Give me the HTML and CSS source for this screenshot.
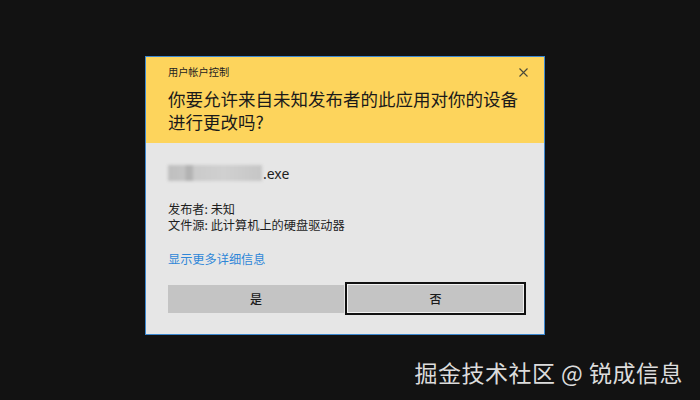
FILE: index.html
```html
<!DOCTYPE html>
<html lang="zh-CN">
<head>
<meta charset="utf-8">
<link rel="stylesheet" href="styles.css">
</head>
<body>
<div class="dialog">
  <div class="header">
    <div class="title-row">
      <span class="title">用户帐户控制</span>
      <svg class="close" width="9" height="9" viewBox="0 0 9 9"><path d="M0.5 0.5 L8.5 8.5 M8.5 0.5 L0.5 8.5" stroke="#4a4a3a" stroke-width="1.1" fill="none"/></svg>
    </div>
    <div class="question">你要允许来自未知发布者的此应用对你的设备<br>进行更改吗?</div>
  </div>
  <div class="body">
    <div class="file-row"><span class="blur"></span><span class="ext">.exe</span></div>
    <div class="meta">
      <div>发布者: 未知</div>
      <div>文件源: 此计算机上的硬盘驱动器</div>
    </div>
    <div class="link">显示更多详细信息</div>
    <div class="buttons">
      <div class="btn yes">是</div>
      <div class="btn no">否</div>
    </div>
  </div>
</div>
<div class="watermark">掘金技术社区 @ 锐成信息</div>
</body>
</html>
```
FILE: styles.css
```css
html, body {
  margin: 0;
  padding: 0;
  width: 700px;
  height: 400px;
  background: #121212;
  overflow: hidden;
  font-family: "Noto Sans CJK SC", "Noto Sans", sans-serif;
}
body {
  padding-top: 56px;
  box-sizing: border-box;
}
.dialog {
  margin-left: 145px;
  width: 400px;
  height: 279px;
  box-sizing: border-box;
  border: 1px solid #3b87cf;
  background: #e6e6e6;
  display: flex;
  flex-direction: column;
}
.header {
  background: #fdd45c;
  padding: 7px 16px 9px 22px;
  height: 86px;
  box-sizing: border-box;
}
.title-row {
  display: flex;
  justify-content: space-between;
  align-items: center;
  height: 16px;
}
.title {
  font-size: 10.2px;
  line-height: 16px;
  color: #222;
}
.close {
  display: block;
}
.question {
  margin-top: 7px;
  font-size: 17.5px;
  line-height: 23px;
  color: #1a1a1a;
}
.body {
  flex: 1;
  padding: 20px 18px 0 22px;
}
.file-row {
  display: flex;
  align-items: center;
  height: 20px;
}
.blur {
  display: inline-block;
  width: 94px;
  height: 16px;
  background: linear-gradient(90deg, #bfbfbf 0%, #c4c4c4 18%, #b3b3b3 19%, #b3b3b3 26%, #cacaca 27%, #d0d0d0 60%, #c6c6c6 100%);
  filter: blur(1.5px);
}
.ext {
  font-family: "Noto Sans", sans-serif;
  font-size: 14px;
  color: #1e1e1e;
  margin-left: 1px;
}
.meta {
  margin-top: 18px;
  font-size: 12.2px;
  line-height: 16px;
  color: #1e1e1e;
}
.link {
  margin-top: 18px;
  font-size: 12.2px;
  line-height: 16px;
  color: #2f86d8;
}
.buttons {
  margin-top: 15px;
  display: flex;
  align-items: center;
  gap: 1px;
  height: 33px;
}
.btn {
  box-sizing: border-box;
  display: flex;
  align-items: center;
  justify-content: center;
  background: #c4c4c4;
  font-size: 12px;
  font-weight: 500;
  color: #1a1a1a;
}
.yes {
  width: 176px;
  height: 28px;
}
.no {
  width: 181px;
  height: 33px;
  border: 2px solid #111;
  box-shadow: inset 0 0 0 1px #f2f2f2;
}
.watermark {
  position: absolute;
  right: 17px;
  top: 357px;
  font-size: 23px;
  line-height: 30px;
  color: #dcdcdc;
  letter-spacing: 0.5px;
}
```
